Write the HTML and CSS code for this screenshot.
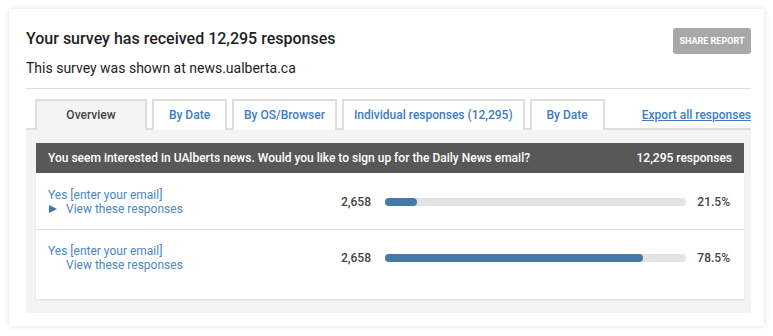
FILE: index.html
```html
<!DOCTYPE html>
<html>
<head>
<meta charset="utf-8">
<link rel="stylesheet" href="styles.css">
</head>
<body>
<div class="card">
  <div class="top">
    <div>
      <h1 class="title">Your survey has received 12,295 responses</h1>
      <p class="sub">This survey was shown at news.ualberta.ca</p>
    </div>
    <button class="share">SHARE REPORT</button>
  </div>
  <div class="divider"></div>
  <div class="tabs">
    <div class="tab active">Overview</div>
    <div class="tab">By Date</div>
    <div class="tab">By OS/Browser</div>
    <div class="tab">Individual responses (12,295)</div>
    <div class="tab">By Date</div>
    <a class="export" href="#">Export all responses</a>
  </div>
  <div class="area">
    <div class="qhead">
      <span>You seem interested in UAlberts news. Would you like to sign up for the Daily News email?</span>
      <span>12,295 responses</span>
    </div>
    <div class="panel">
      <div class="row">
        <div class="label">
          <div>Yes [enter your email]</div>
          <div class="view"><span class="tri"></span>View these responses</div>
        </div>
        <div class="count">2,658</div>
        <div class="bar"><div class="fill" style="width:10.6%"></div></div>
        <div class="pct">21.5%</div>
      </div>
      <div class="row">
        <div class="label">
          <div>Yes [enter your email]</div>
          <div class="view">View these responses</div>
        </div>
        <div class="count">2,658</div>
        <div class="bar"><div class="fill" style="width:85.7%"></div></div>
        <div class="pct">78.5%</div>
      </div>
    </div>
  </div>
</div>
</body>
</html>
```
FILE: styles.css
```css
* { box-sizing: border-box; }
html, body { margin: 0; padding: 0; background: #fff; }
body { font-family: Roboto, "Liberation Sans", Arial, sans-serif; color: #222; }

.card {
  margin: 9px;
  width: 755px;
  height: 317px;
  padding: 20px 13px 13px 17px;
  background: #fff;
  box-shadow: 0 0 6px rgba(0,0,0,0.13);
}

.top { display: flex; justify-content: space-between; align-items: flex-start; }
.title { margin: 0; font-size: 16px; line-height: 20px; font-weight: 500; color: #1e1e1e; }
.sub { margin: 9px 0 0; font-size: 14px; line-height: 20px; color: #222; }
.share {
  margin-top: -1px;
  width: 78px; height: 26px;
  border: none; border-radius: 3px;
  background: #a8a8a8; color: #fff;
  font-family: Roboto, "Liberation Sans", Arial, sans-serif;
  font-size: 9px; font-weight: 700; padding: 0;
}

.divider { height: 1px; background: #dcdcdc; margin-top: 10px; }

.tabs {
  display: flex; align-items: flex-end; gap: 5px;
  margin-top: 10px;
  padding-left: 9px;
  border-bottom: 2px solid #dedede;
}
.tab {
  min-width: 75px;
  padding: 0 10px 2px;
  border: 2px solid #dedede;
  border-bottom: none;
  margin-bottom: -2px;
  height: 31px;
  background: #fff;
  display: flex; align-items: center; justify-content: center;
  font-size: 12px; font-weight: 500; color: #3d7cc6;
}
.tab.active { width: 112px; background: #f4f4f4; color: #444; }
.export {
  margin-left: auto; align-self: center;
  font-size: 12px; font-weight: 500; color: #3d7cc6;
  text-decoration: underline;
  margin-top: 2px;
}

.area { background: #f4f4f4; padding: 13px 7px 14px 10px; height: 183px; }
.qhead {
  height: 30px; background: #585858; color: #fff;
  display: flex; justify-content: space-between; align-items: center;
  padding: 0 12px; font-size: 12px; font-weight: 500;
}
.panel { background: #fff; box-shadow: 0 1px 2px rgba(0,0,0,0.1); padding-bottom: 14px; }
.row {
  display: flex; align-items: center;
  padding: 15px 14px 13px 12px;
  border-bottom: 1px solid #dddddd;
}
.row:last-child { border-bottom: none; padding-top: 14px; }
.label { flex: 1; font-size: 12px; line-height: 14px; color: #4a86c6; }
.view { display: flex; align-items: center; padding-left: 18px; }
.tri {
  width: 0; height: 0; margin-left: -17px; margin-right: 9px;
  border-top: 4.5px solid transparent; border-bottom: 4.5px solid transparent;
  border-left: 8px solid #3f76ad;
}
.count { font-size: 12px; font-weight: 500; color: #444; margin-right: 14px; }
.bar { width: 301px; height: 8px; border-radius: 4px; background: #e3e3e3; }
.fill { height: 8px; border-radius: 4px; background: #4479a9; }
.pct { width: 44px; text-align: right; font-size: 12px; font-weight: 500; color: #444; }
```
